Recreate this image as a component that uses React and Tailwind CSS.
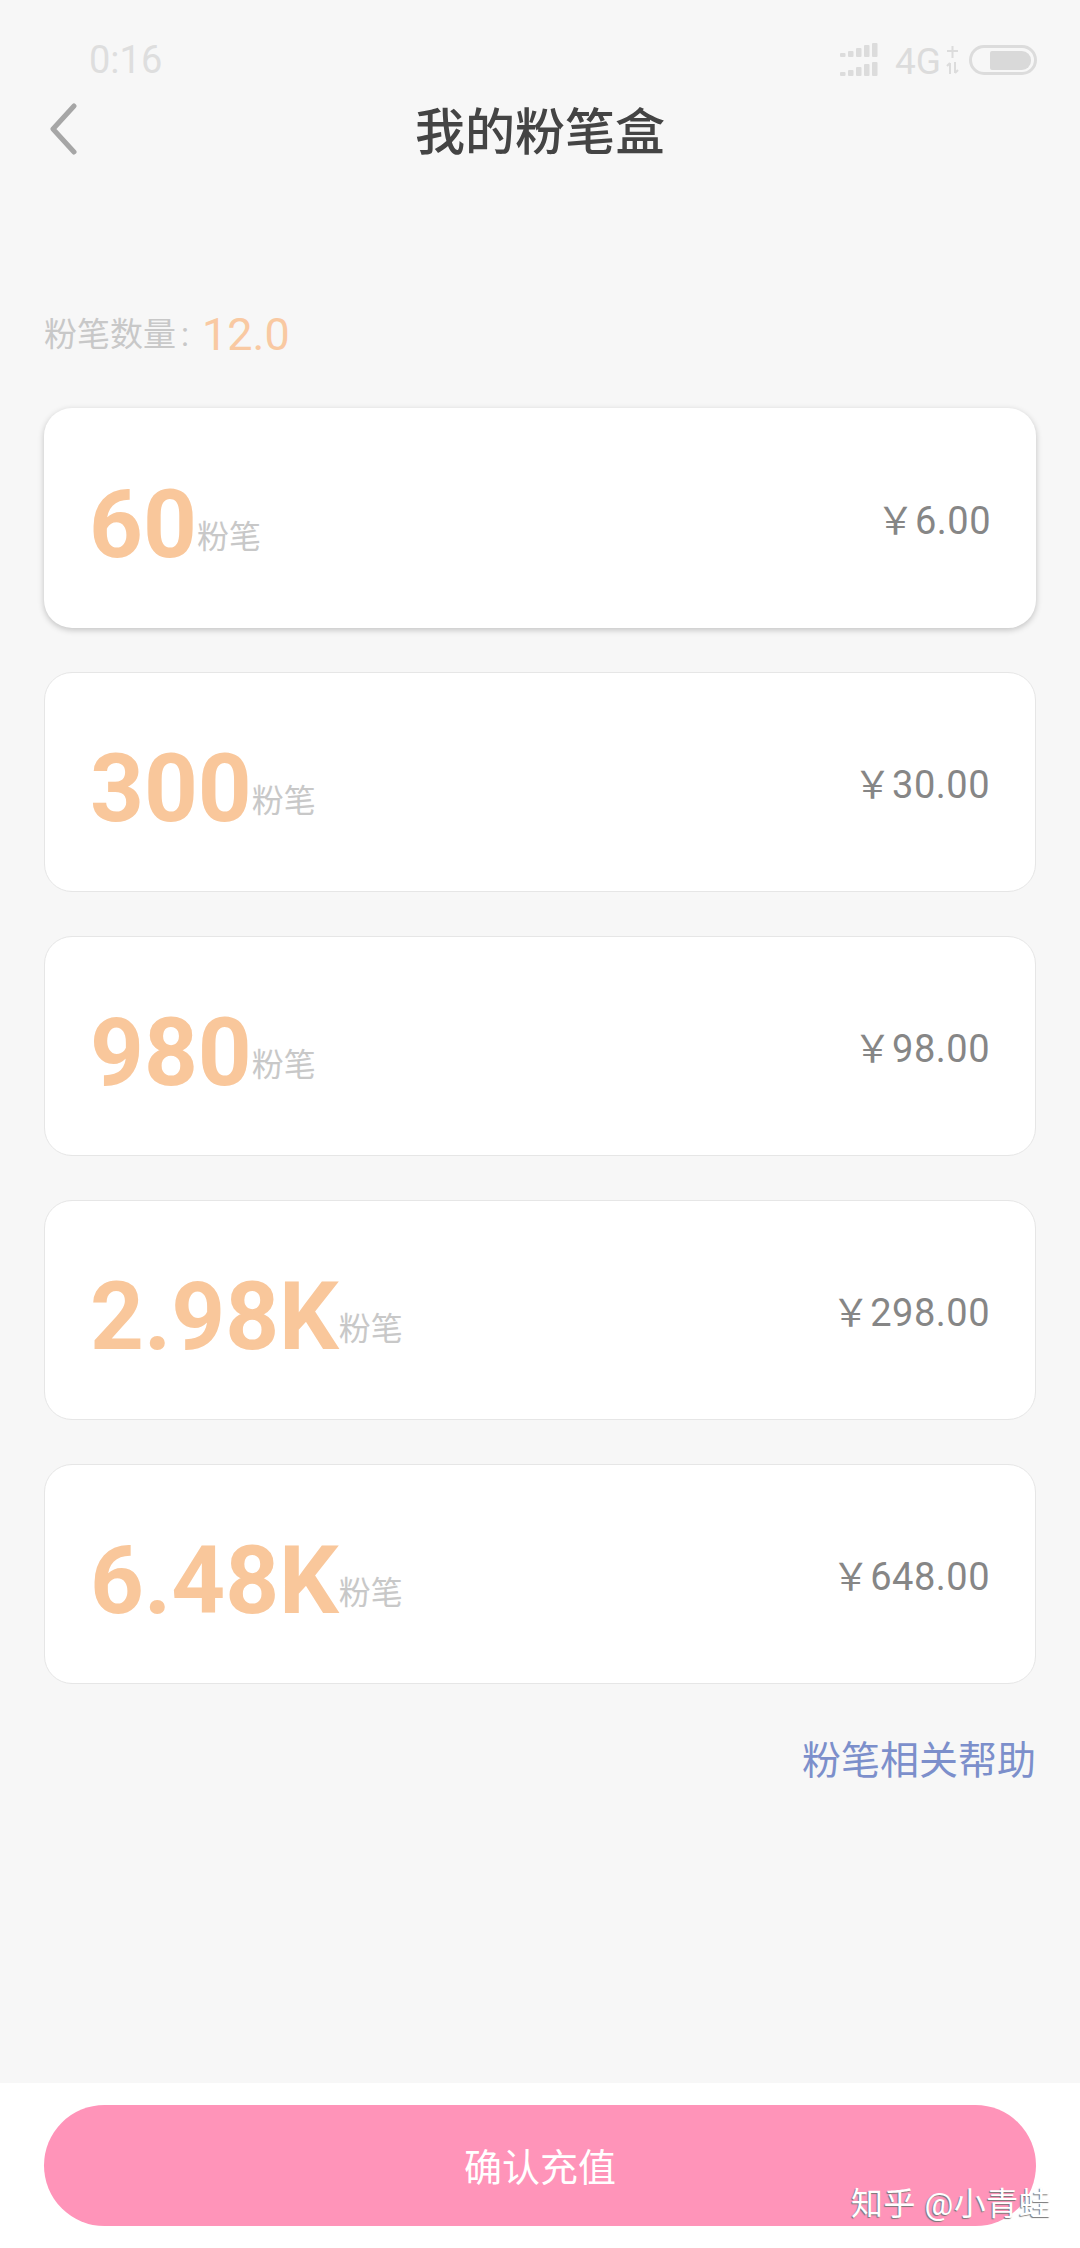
import React from 'react';

const font = 'font-["Roboto","Noto_Sans_CJK_SC",sans-serif]';

const packs = [
  { amount: '60', price: '6.00', active: true },
  { amount: '300', price: '30.00' },
  { amount: '980', price: '98.00' },
  { amount: '2.98K', price: '298.00' },
  { amount: '6.48K', price: '648.00' },
];

function SignalIcon() {
  const rows = [0, 19];
  const bars = [
    { x: 0, h: 4 },
    { x: 8, h: 6 },
    { x: 16, h: 9 },
    { x: 24, h: 12 },
    { x: 32, h: 14 },
  ];
  return (
    <svg width="41" height="34" viewBox="0 0 41 34" fill="#dcdcdc">
      {rows.map((y) =>
        bars.map((b) => <rect key={`${y}-${b.x}`} x={b.x} y={y + 14 - b.h} width="5.5" height={b.h} rx="1" />)
      )}
    </svg>
  );
}

function ArrowsIcon() {
  return (
    <svg className="ml-[5px]" width="13" height="30" viewBox="0 0 13 30" fill="none" stroke="#dcdcdc" strokeWidth="2">
      <path d="M6.5 1v12M1 6h11" />
      <path d="M4 18v11M1 21l3-3M9 17v11M9 28l3-3" />
    </svg>
  );
}

function StatusBar() {
  return (
    <div className="flex h-[90px] items-start justify-between pl-[89px] pr-[43px] pt-[38px]">
      <span className="text-[38px] leading-[44px] text-[#dedede]">0:16</span>
      <div className="flex items-center pt-[3px]">
        <SignalIcon />
        <span className="ml-[14px] pt-[4px] text-[37px] leading-[34px] text-[#dcdcdc]">4G</span>
        <ArrowsIcon />
        <div className="ml-[10px] flex h-[30px] w-[68px] items-center justify-end rounded-full border-[3px] border-[#dcdcdc] pr-[3px]">
          <div className="h-[19px] w-[41px] rounded-r-[9px] rounded-l-[2px] bg-[#d9d9d9]" />
        </div>
      </div>
    </div>
  );
}

function NavBar() {
  return (
    <div className="relative flex h-[80px] items-center justify-center pt-[6px]">
      <svg className="absolute left-[48px] top-[13px]" width="30" height="52" viewBox="0 0 30 52" fill="none">
        <path d="M26 3 5 26l21 23" stroke="#a6a6a6" strokeWidth="5" strokeLinecap="round" strokeLinejoin="round" />
      </svg>
      <h1 className="text-[50px] font-medium leading-[60px] text-[#444444]">我的粉笔盒</h1>
    </div>
  );
}

function PackCard({ amount, price, active }) {
  return (
    <div
      className={`flex h-[220px] items-center justify-between rounded-[28px] bg-white pl-[45px] pr-[45px] pt-[6px] ${
        active ? 'shadow-[0_2px_6px_rgba(0,0,0,0.22)]' : 'border border-[#e6e6e6]'
      }`}
    >
      <div className="flex items-center pt-[8px]">
        <span className="text-[94px] font-bold leading-[110px] text-[#f9c79b]">{amount}</span>
        <span className="pt-[24px] text-[32px] leading-[44px] text-[#c8c8c8]">粉笔</span>
      </div>
      <span className="text-[38px] leading-[44px] tracking-[0.5px] text-[#868686]">￥{price}</span>
    </div>
  );
}

export default function App() {
  return (
    <div className={`flex h-[2248px] w-[1080px] flex-col bg-[#f7f7f7] ${font}`}>
      <StatusBar />
      <NavBar />

      <div className="px-[44px]">
        <div className="mt-[140px] flex h-[50px] items-center">
          <span className="text-[33px] text-[#c8c8c8]">粉笔数量</span>
          <span className="ml-[5px] text-[33px] text-[#c8c8c8]">:</span>
          <span className="ml-[13px] text-[45px] text-[#f9c9a2]">12.0</span>
        </div>

        <div className="mt-[48px] flex flex-col gap-[44px]">
          {packs.map((p) => (
            <PackCard key={p.amount} {...p} />
          ))}
        </div>

        <div className="mt-[52px] text-right text-[39px] leading-[50px] text-[#7c8fcb]">粉笔相关帮助</div>
      </div>

      <div className="relative mt-auto flex h-[165px] items-start bg-white px-[44px] pt-[22px]">
        <button className="h-[121px] w-full rounded-full bg-[#ff94b9] pt-[5px] text-[38px] text-white">确认充值</button>
        <span className="absolute left-[851px] top-[101px] text-[32px] leading-[40px] tracking-[0.5px] text-white [text-shadow:-1px_1px_1px_#777777]">
          知乎 @小青蛙
        </span>
      </div>
    </div>
  );
}
